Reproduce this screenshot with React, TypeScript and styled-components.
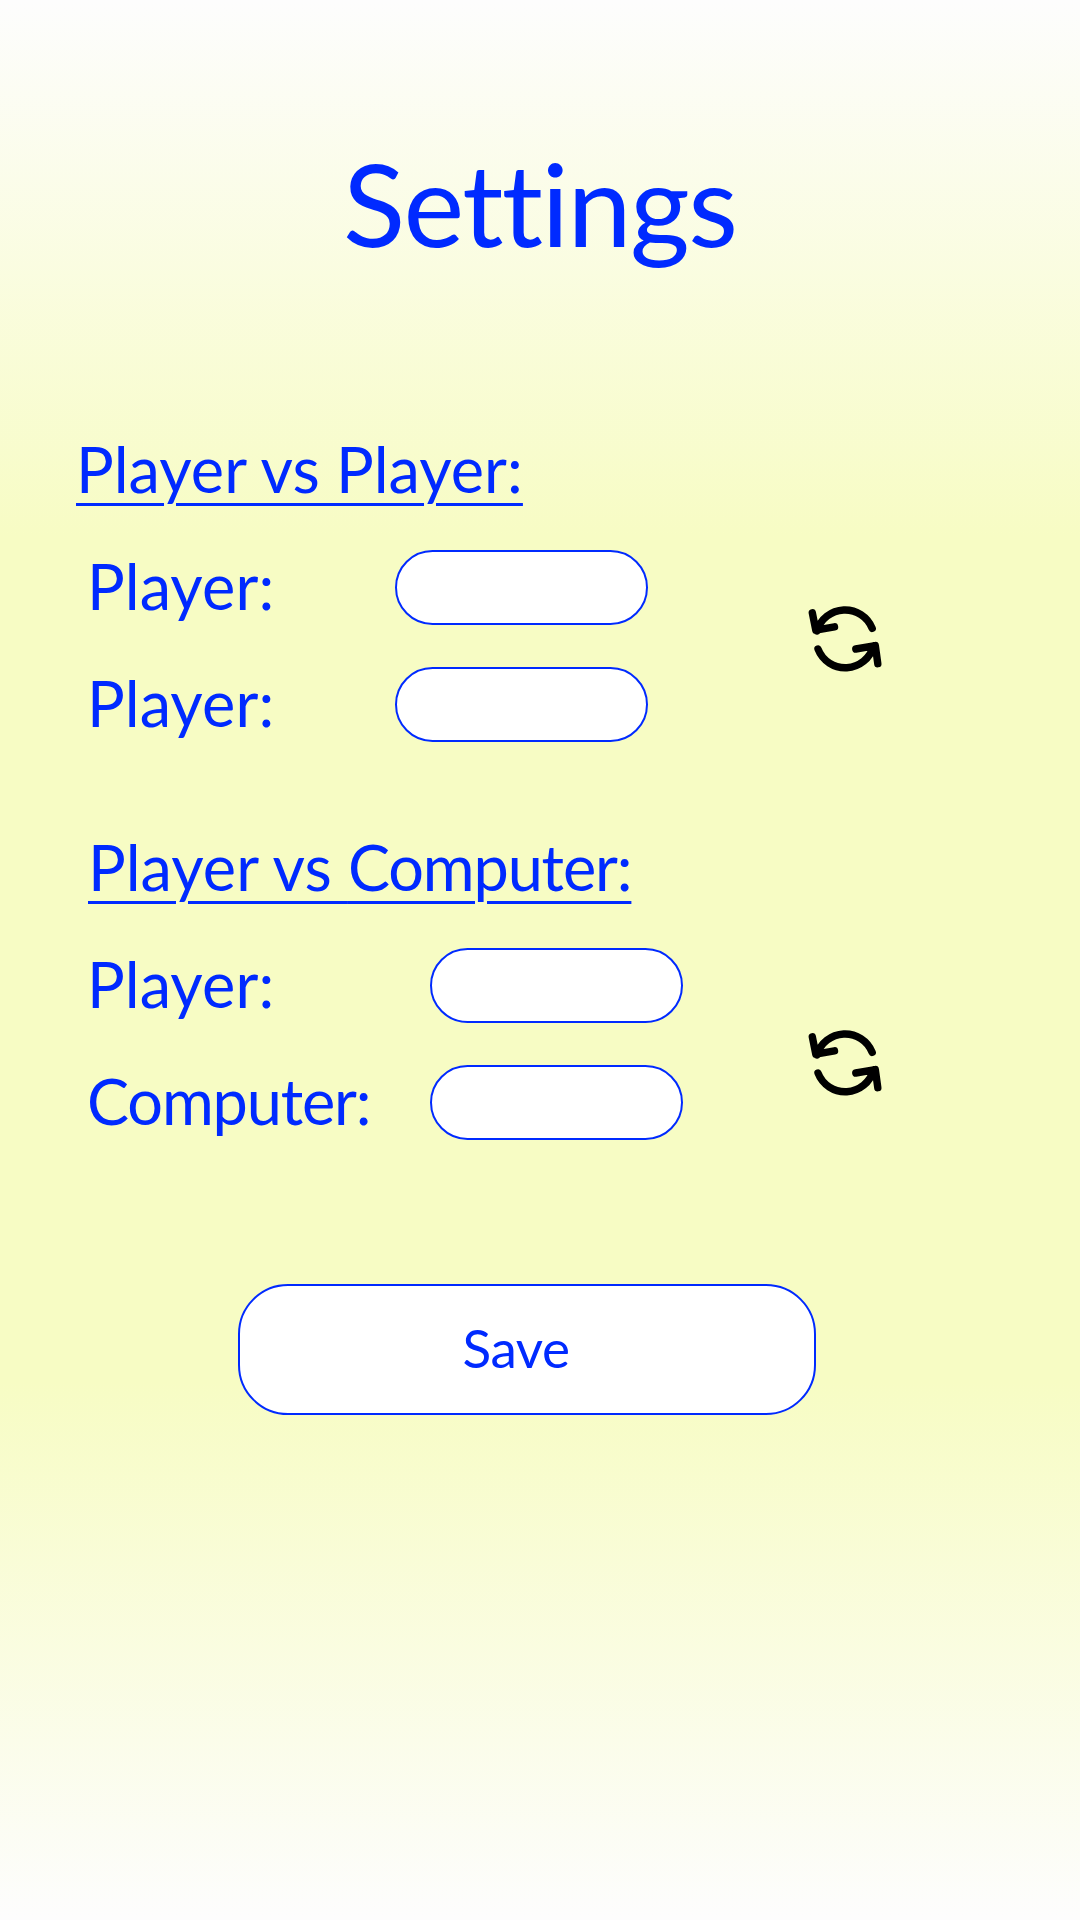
import React from "react";
import styled, { createGlobalStyle } from "styled-components";

const BLUE = "#002aff";

const GlobalStyle = createGlobalStyle`
  body {
    margin: 0;
  }
  *, *::before, *::after {
    box-sizing: border-box;
  }
`;

const Page = styled.main`
  display: flex;
  flex-direction: column;
  width: 1080px;
  height: 1920px;
  overflow: hidden;
  padding-top: 131px;
  font-family: Lato, "Open Sans", sans-serif;
  font-weight: 400;
  font-variant-ligatures: none;
  color: ${BLUE};
  background: linear-gradient(180deg, #fdfdfd 0%, #f7fcc4 28%, #f7fcc4 72%, #fdfdfd 100%);
`;

const Title = styled.h1`
  margin: 0;
  padding-left: 343px;
  font-size: 115px;
  font-weight: 400;
  line-height: 142px;
  letter-spacing: -1.6px;
  white-space: nowrap;
`;

const Section = styled.section<{ $top: number }>`
  margin-top: ${(p) => p.$top}px;
`;

const SectionTitle = styled.h2<{ $left: number }>`
  width: fit-content;
  margin: 0 0 43px ${(p) => p.$left}px;
  font-size: 63px;
  font-weight: 400;
  line-height: 76px;
  letter-spacing: 0.05px;
  white-space: nowrap;
  text-decoration: underline;
  text-decoration-thickness: 3px;
  text-underline-offset: 10px;
`;

const TightWord = styled.span`
  letter-spacing: -1.15px;
`;

const Group = styled.div`
  display: flex;
  padding-left: 87px;
`;

const Fields = styled.div<{ $label: number }>`
  display: grid;
  grid-template-columns: ${(p) => p.$label}px 253px;
  grid-auto-rows: 75px;
  row-gap: 42px;
`;

const Label = styled.label`
  padding-bottom: 3px;
  font-size: 63px;
  line-height: 72px;
  letter-spacing: 0.1px;
  white-space: nowrap;
`;

const NameInput = styled.input`
  width: 253px;
  height: 75px;
  padding: 0 28px;
  border: 2px solid ${BLUE};
  border-radius: 37.5px;
  outline: none;
  background: #fff;
  color: ${BLUE};
  font: 400 40px Lato, sans-serif;
`;

const SwapButton = styled.button<{ $left: number; $top: number }>`
  width: 80px;
  height: 80px;
  margin: ${(p) => p.$top}px 0 0 ${(p) => p.$left}px;
  padding: 0;
  border: 0;
  background: none;
  color: #000;
  svg {
    display: block;
  }
`;

const SaveButton = styled.button`
  display: flex;
  align-items: center;
  justify-content: center;
  width: 578px;
  height: 131px;
  margin: 144px 0 0 238px;
  padding: 0 22px 4px 0;
  border: 2px solid ${BLUE};
  border-radius: 50px;
  background: #fff;
  color: ${BLUE};
  font: 400 53px Lato, sans-serif;
  letter-spacing: -0.5px;
`;

const SwapIcon = () => (
  <svg
    width="80"
    height="80"
    viewBox="0 0 80 80"
    fill="none"
    stroke="currentColor"
    strokeWidth="7.4"
    strokeLinecap="round"
    strokeLinejoin="round"
  >
    <path d="M67.2 29.4A29.2 29.2 0 0 0 12 32M7.3 13.8L10.8 31.2L29.5 27.8" />
    <path d="M13 50A29.2 29.2 0 0 0 68.5 47M50.8 50L70.3 46.6L72.8 64.7" />
  </svg>
);

export default function App() {
  return (
    <>
      <GlobalStyle />
      <Page>
        <Title>Settings</Title>
        <Section $top={158}>
          <SectionTitle $left={76}>Player vs Player:</SectionTitle>
          <Group>
            <Fields $label={308}>
              <Label htmlFor="player-one">Player:</Label>
              <NameInput id="player-one" />
              <Label htmlFor="player-two">Player:</Label>
              <NameInput id="player-two" />
            </Fields>
            <SwapButton $left={157} $top={49} aria-label="Swap players">
              <SwapIcon />
            </SwapButton>
          </Group>
        </Section>
        <Section $top={87}>
          <SectionTitle $left={88}>
            Player vs <TightWord>Computer:</TightWord>
          </SectionTitle>
          <Group>
            <Fields $label={343}>
              <Label htmlFor="player">Player:</Label>
              <NameInput id="player" />
              <Label htmlFor="computer">
                <TightWord>Computer:</TightWord>
              </Label>
              <NameInput id="computer" />
            </Fields>
            <SwapButton $left={122} $top={75} aria-label="Swap player and computer">
              <SwapIcon />
            </SwapButton>
          </Group>
        </Section>
        <SaveButton>Save</SaveButton>
      </Page>
    </>
  );
}
